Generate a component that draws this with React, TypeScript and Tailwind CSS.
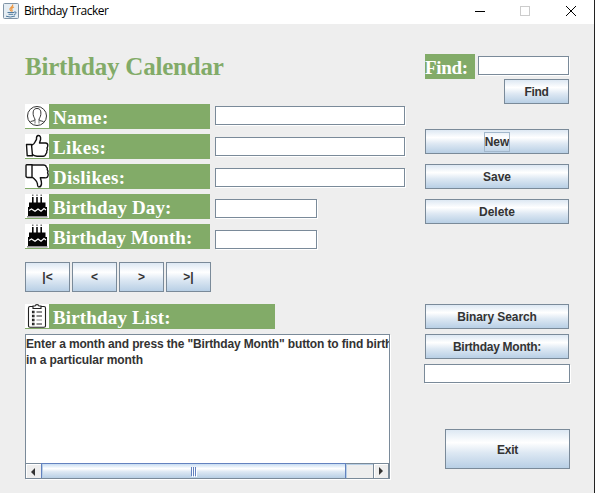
import type { ReactNode } from 'react';

const BUTTON =
  'flex items-center justify-center border border-[#7a8a99] bg-[linear-gradient(to_bottom,#dde8f3_0%,#ffffff_33%,#dde8f3_60%,#b8cfe5_100%)] text-[12px] leading-none font-bold text-[#333333]';

function Button({ className, children }: { className: string; children: ReactNode }) {
  return <button className={`${BUTTON} ${className}`}>{children}</button>;
}

function Field({ className }: { className: string }) {
  return (
    <input
      className={`block h-[19px] border border-[#7a8a99] bg-white shadow-[1px_1px_0_#ffffff] outline-none ${className}`}
    />
  );
}

function PersonIcon() {
  return (
    <svg viewBox="0 0 24 24" className="h-6 w-6 bg-white" fill="none" stroke="#333" strokeWidth="1">
      <circle cx="12" cy="12" r="9.5" />
      <path d="M5 18.5C6 16.5 9.5 17.3 10 16C10 14.3 8.4 13 8.2 10.5C7.8 6.5 9 4.5 12 4.5S16.2 6.5 15.8 10.5C15.6 13 14 14.3 14 16C14.5 17.3 18 16.5 19 18.5" />
      <path d="M10 15.5V19.5M14 15.5V19.5" stroke="#777" />
    </svg>
  );
}

function ThumbIcon({ down = false }: { down?: boolean }) {
  return (
    <svg viewBox="0 0 24 24" className="h-6 w-6 bg-white" fill="none" stroke="#111" strokeWidth="1.4" strokeLinejoin="round">
      {down ? (
        <>
          <path d="M1 1.5Q1 .8 2 .8H7V13.5H2.5Q1 13.5 1 12Z" />
          <path d="M7 1H18.5Q21 1 21.3 3Q22.7 3.8 22.2 5.7Q23.5 7 22.6 8.8Q23.8 11 22.4 13Q21.5 14 19.5 13.8H15.3Q16.8 18 16.4 20.5Q15.8 23.3 13.3 22.8Q12.5 22.5 12.4 19.7Q12 17.5 9.7 15.3Q8 13.5 7 13.4" />
        </>
      ) : (
        <>
          <path d="M1.5 10.5H6.5L7.5 21.7H2.2Z" />
          <path d="M7 11Q9 10.3 10.2 7.7L11.5 5.3Q11.2 2 13 1.5Q16 1.3 15.6 5.5L14.5 9H20.5Q23 9.3 22.8 11.5Q22.7 13 22 14Q23 15.5 21.8 17Q22.2 19 20.8 20Q20.5 22.2 18 22.3H12Q9 22 7.4 20.5" />
        </>
      )}
    </svg>
  );
}

function CakeIcon() {
  return (
    <svg viewBox="0 0 24 24" className="h-6 w-6 bg-white">
      <path d="M7 3h1.6v6H7zM11.2 3h1.6v6h-1.6zM15.4 3H17v6h-1.6zM4 8.5h16.5V13H22v9H3v-9h1z" fill="#050505" />
      <path d="M7.8 .5v1.5M12 .5v1.5M16.2 .5v1.5" stroke="#555" strokeWidth="1.2" />
      <path d="M4 16.5L6.5 15L10 17.3L13 15L16 17.3L19 14.5L21 16" fill="none" stroke="white" strokeWidth="1.2" />
      <path d="M2 22.8H22.5" stroke="#8b8b8b" strokeWidth="1.5" />
    </svg>
  );
}

function ClipboardIcon() {
  return (
    <svg viewBox="0 0 24 24" className="h-6 w-6 bg-white" fill="none" stroke="#222" strokeWidth="1.1">
      <path d="M8 2.5H5Q3.5 2.5 3.5 4V22Q3.5 23.2 5 23.2H19Q20.5 23.2 20.5 22V4Q20.5 2.5 19 2.5H16" />
      <path d="M8 4.5V2H10Q10.3.6 12 .6T14 2H16V4.5Z" />
      <path d="M7.5 7.2h1.5v1.5H7.5zM7.5 11.2h1.5v1.5H7.5zM7.5 15.2h1.5v1.5H7.5zM7.5 19.2h1.5v1.5H7.5z" strokeWidth="1.1" />
      <path d="M11.5 8h5.5M11.5 12h5.5M11.5 20h5.5" />
      <path d="M11.5 16h5.5" stroke="#999" />
    </svg>
  );
}

function Label({ icon, className, children }: { icon: ReactNode; className: string; children: ReactNode }) {
  return (
    <div className={`flex h-[25px] bg-[#82ab68] font-['Liberation_Serif',serif] text-[19px] leading-[28px] font-bold whitespace-nowrap text-white ${className}`}>
      {icon}
      <span className="ml-1">{children}</span>
    </div>
  );
}

function TitleBar() {
  return (
    <header className="flex h-6 items-start bg-white">
      <svg viewBox="0 0 16 16" className="mt-[3px] ml-[3px] h-4 w-4" fill="none">
        <rect x=".5" y=".5" width="15" height="15" rx="1" fill="#e5edf3" stroke="#8094a6" />
        <path d="M9.8 1.5Q10 3.2 7.8 4.8Q6 6.2 8 8M11 4Q7.7 5.3 9 7Q9.5 8 8.5 8.8" stroke="#ed9641" strokeWidth="1.2" />
        <path d="M4.5 9.5H11M5.5 11.3H10.3M3 13.2Q7 15 12 13M11 9Q14 8.5 13 10.4Q12.5 11.3 11 11.5" stroke="#527c9f" />
      </svg>
      <h1 className="mt-[3px] ml-[5px] font-['Open_Sans','Noto_Sans',sans-serif] text-[12px] leading-4 tracking-[-0.5px] text-black">Birthday Tracker</h1>
      <svg viewBox="0 0 104 12" className="mt-[5px] mr-[17px] ml-auto h-3 w-[104px]" fill="none" shapeRendering="crispEdges">
        <path d="M2 6.5H12" stroke="#000" />
        <rect x="47.5" y="1.5" width="9" height="9" stroke="#ccc" />
        <path d="M93 1L103 11M103 1L93 11" stroke="#000" shapeRendering="auto" />
      </svg>
    </header>
  );
}

function BirthdayList() {
  return (
    <section className="mt-[5px] flex h-[145px] w-[365px] flex-col border border-[#7a8a99] bg-white shadow-[1px_1px_0_#ffffff]">
      <div className="min-h-0 flex-1 overflow-hidden pt-px text-[12px] leading-4 font-bold whitespace-nowrap text-[#333333]">
        <p className="tracking-[-0.14px]">Enter a month and press the "Birthday Month" button to find birth</p>
        <p className="tracking-[-0.08px]">in a particular month</p>
      </div>
      <div className="flex h-[15px] border-t border-[#7a8a99] bg-[#eeeeee]">
        <div className="flex w-[15px] items-center justify-center border-t border-l border-white pr-0.5">
          <svg viewBox="0 0 4 8" className="h-2 w-1"><path d="M4 0V8L0 4Z" fill="#333" /></svg>
        </div>
        <div className="-mt-px flex h-[15px] w-[305px] items-center justify-center border-x border-t border-[#6382bf] bg-[linear-gradient(to_bottom,#c8ddf2_0%,#ffffff_33%,#dde8f3_55%,#b8cfe5_100%)] shadow-[inset_1px_0_0_#b8cfe5]">
          <div className="flex h-[9px] gap-px">
            <i className="w-px bg-[#6382bf] shadow-[1px_1px_0_#fff]" />
            <i className="w-px bg-[#6382bf] shadow-[1px_1px_0_#fff]" />
            <i className="w-px bg-[#6382bf] shadow-[1px_1px_0_#fff]" />
          </div>
        </div>
        <div className="w-[27px] border-t border-l border-[#b8cfe5]" />
        <div className="flex flex-1 items-center justify-center border-x border-[#7a8a99] shadow-[inset_1px_1px_0_#fff]">
          <svg viewBox="0 0 4 8" className="h-2 w-1"><path d="M0 0V8L4 4Z" fill="#333" /></svg>
        </div>
      </div>
    </section>
  );
}

export default function App() {
  return (
    <div className="h-[493px] w-[595px] overflow-hidden border-r border-[#222222] bg-[#eeeeee] font-['Liberation_Sans',Arial,sans-serif]">
      <TitleBar />
      <main className="flex pl-[25px]">
        <div className="w-[399px]">
          <h2 className="mt-[29px] h-[51px] font-['Liberation_Serif',serif] text-[25px] leading-[28px] font-bold tracking-[-0.2px] text-[#82ab68]">Birthday Calendar</h2>
          <div className="flex gap-[5px]">
            <div className="flex w-[185px] flex-col gap-[5px]">
              <Label className="w-full tracking-[0.35px]" icon={<PersonIcon />}>Name:</Label>
              <Label className="w-full tracking-[0.45px]" icon={<ThumbIcon />}>Likes:</Label>
              <Label className="w-full tracking-[0.3px]" icon={<ThumbIcon down />}>Dislikes:</Label>
              <Label className="w-full tracking-[0.15px]" icon={<CakeIcon />}>Birthday Day:</Label>
              <Label className="w-full tracking-[0.03px]" icon={<CakeIcon />}>Birthday Month:</Label>
            </div>
            <div className="flex flex-col gap-3 pt-0.5">
              <Field className="w-[190px]" />
              <Field className="w-[190px]" />
              <Field className="w-[190px]" />
              <Field className="w-[102px]" />
              <Field className="w-[102px]" />
            </div>
          </div>
          <nav className="mt-[13px] flex gap-0.5">
            <Button className="h-[30px] w-[45px]">|&lt;</Button>
            <Button className="h-[30px] w-[45px]">&lt;</Button>
            <Button className="h-[30px] w-[45px]">&gt;</Button>
            <Button className="h-[30px] w-[45px]">&gt;|</Button>
          </nav>
          <Label className="mt-3 w-[250px] tracking-[0.15px]" icon={<ClipboardIcon />}>Birthday List:</Label>
          <BirthdayList />
        </div>
        <aside className="w-[146px] pt-[30px]">
          <div className="ml-px flex h-[25px] gap-[3px]">
            <span className="w-[50px] bg-[#82ab68] font-['Liberation_Serif',serif] text-[19px] leading-[28px] font-bold tracking-[-0.3px] text-white">Find:</span>
            <Field className="mt-0.5 w-[91px]" />
          </div>
          <Button className="ml-[80px] h-[25px] w-[65px] tracking-[-0.3px]">Find</Button>
          <div className="mt-[25px] ml-px flex w-36 flex-col gap-2.5">
            <Button className="h-[25px]"><span className="-my-[3px] px-0 py-[3px] outline outline-[#a3b8cc]">New</span></Button>
            <Button className="h-[25px]">Save</Button>
            <Button className="h-[25px]">Delete</Button>
          </div>
          <div className="mt-20 ml-px flex w-36 flex-col gap-[5px]">
            <Button className="h-[25px] tracking-[-0.08px]">Binary Search</Button>
            <Button className="h-[25px] tracking-[-0.26px]">Birthday Month:</Button>
          </div>
          <Field className="mt-[5px] w-[146px]" />
          <Button className="mt-[46px] ml-[21px] h-10 w-[125px] pt-px tracking-[-0.2px]">Exit</Button>
        </aside>
      </main>
    </div>
  );
}
